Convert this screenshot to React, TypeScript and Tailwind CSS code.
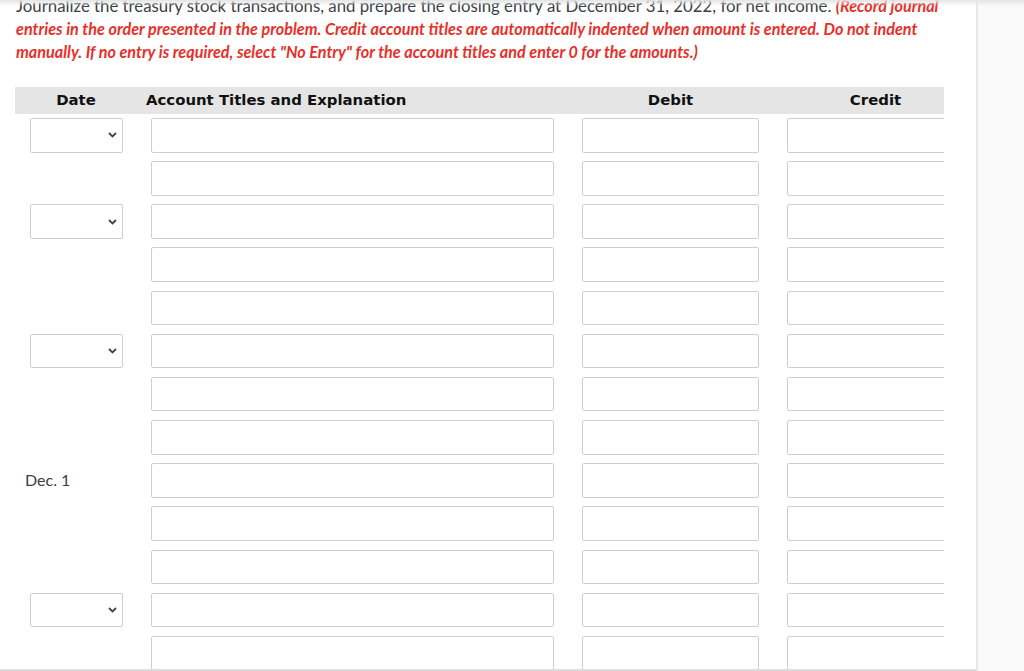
import React from "react";

const rows: Array<{ date: "select" | "text" | "none" }> = [
  { date: "select" },
  { date: "none" },
  { date: "select" },
  { date: "none" },
  { date: "none" },
  { date: "select" },
  { date: "none" },
  { date: "none" },
  { date: "text" },
  { date: "none" },
  { date: "none" },
  { date: "select" },
  { date: "none" },
];

function Chevron() {
  return (
    <svg width="9" height="6" viewBox="0 0 9 6" className="block">
      <path d="M1 1 L4.5 4.5 L8 1" fill="none" stroke="#444" strokeWidth="1.8" />
    </svg>
  );
}

export default function App() {
  return (
    <div className="relative flex h-[671px] w-[1024px] overflow-hidden bg-white font-['Lato','Noto_Sans',sans-serif]">
      <div className="pointer-events-none absolute left-0 right-0 top-0 h-[6px] bg-gradient-to-b from-[#e4e4e4] to-transparent" />
      <div className="flex w-[976px] shrink-0 flex-col border-b-2 border-[#dcdcdc]">
        <div className="ml-[16px] -mt-[6px] w-[930px] text-[16.8px] leading-[23px] text-[#3a4046]">
          Journalize the treasury stock transactions, and prepare the closing entry at December 31, 2022, for net income.{" "}
          <span className="text-[16.2px] leading-[20px] font-bold italic text-[#e8302a]">
            (Record journal entries in the order presented in the problem. Credit account titles are automatically indented when amount is entered. Do not indent manually. If no entry is required, select "No Entry" for the account titles and enter 0 for the amounts.)
          </span>
        </div>
        <div className="ml-[15px] mt-[24px] w-[929px] overflow-hidden">
          <div className="grid h-[27px] w-[963px] grid-cols-[122px_431px_205px_205px] items-center bg-[#e5e5e5] font-['DejaVu_Sans',sans-serif] text-[14.9px] font-bold text-[#111]">
            <div className="text-center">Date</div>
            <div className="pl-[9px]">Account Titles and Explanation</div>
            <div className="text-center">Debit</div>
            <div className="text-center">Credit</div>
          </div>
          <div className="mt-[4px] flex w-[963px] flex-col gap-[8.67px]">
            {rows.map((r, i) => (
              <div key={i} className="grid h-[34.5px] grid-cols-[122px_431px_205px_205px]">
                <div className="flex items-center">
                  {r.date === "select" && (
                    <div className="ml-[15px] flex h-[34.5px] w-[93px] items-center justify-end rounded-[2px] border border-[#cfcfcf] bg-white pr-[5px]">
                      <Chevron />
                    </div>
                  )}
                  {r.date === "text" && (
                    <div className="ml-[10px] -mt-[1px] text-[16px] text-[#3a4046]">Dec. 1</div>
                  )}
                </div>
                <div className="px-[14px]">
                  <div className="h-full rounded-[2px] border border-[#cfcfcf] bg-white" />
                </div>
                <div className="px-[14px]">
                  <div className="h-full rounded-[2px] border border-[#cfcfcf] bg-white" />
                </div>
                <div className="px-[14px]">
                  <div className="h-full rounded-[2px] border border-[#cfcfcf] bg-white" />
                </div>
              </div>
            ))}
          </div>
        </div>
      </div>
      <div className="flex-1 border-l-2 border-[#e8e8e8] bg-[#f9f9f9]" />
    </div>
  );
}
